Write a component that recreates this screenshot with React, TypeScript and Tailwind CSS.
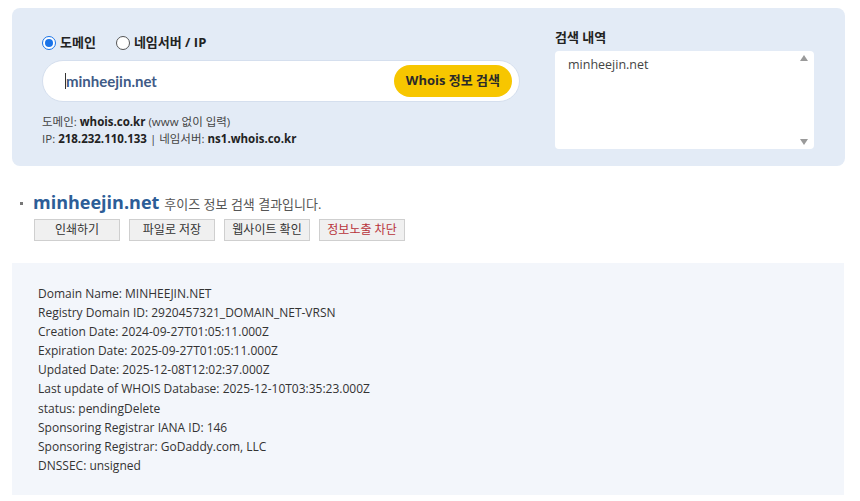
import React from "react";

const whoisLines = [
  "Domain Name: MINHEEJIN.NET",
  "Registry Domain ID: 2920457321_DOMAIN_NET-VRSN",
  "Creation Date: 2024-09-27T01:05:11.000Z",
  "Expiration Date: 2025-09-27T01:05:11.000Z",
  "Updated Date: 2025-12-08T12:02:37.000Z",
  "Last update of WHOIS Database: 2025-12-10T03:35:23.000Z",
  "status: pendingDelete",
  "Sponsoring Registrar IANA ID: 146",
  "Sponsoring Registrar: GoDaddy.com, LLC",
  "DNSSEC: unsigned",
];

const font = "font-['Open_Sans','Noto_Sans_CJK_KR',sans-serif]";

function Radio({ checked, label }: { checked?: boolean; label: string }) {
  return (
    <label className="flex items-center gap-[4px]">
      <span
        className={
          checked
            ? "w-[14px] h-[14px] rounded-full border-[1.5px] border-[#1a73e8] bg-white flex items-center justify-center"
            : "w-[14px] h-[14px] rounded-full border border-[#555] bg-white"
        }
      >
        {checked && <span className="w-[8px] h-[8px] rounded-full bg-[#1a73e8]" />}
      </span>
      <span className="text-[13px] font-bold text-[#222]">{label}</span>
    </label>
  );
}

function ActionButton({ label, red }: { label: string; red?: boolean }) {
  return (
    <button
      className={
        "w-[86px] h-[22px] bg-[#f0f0f0] border border-[#cfcfcf] text-[12px] " +
        (red ? "text-[#b8333a]" : "text-[#333]")
      }
    >
      {label}
    </button>
  );
}

export default function App() {
  return (
    <div className={`w-[860px] h-[501px] bg-white overflow-hidden ${font}`}>
      <div className="mx-[12px] mt-[8px] w-[833px] h-[158px] rounded-[8px] bg-[#e3ebf6] flex pl-[30px] pt-[27px]">
        <div className="w-[478px] flex flex-col">
          <div className="flex items-center gap-[20px] h-[16px]">
            <Radio checked label="도메인" />
            <Radio label="네임서버 / IP" />
          </div>
          <div className="mt-[9px] h-[42px] rounded-full bg-white border border-[#d5dfee] flex items-center justify-between pl-[22px] pr-[7px]">
            <div className="flex items-center">
              <span className="w-[1px] h-[16px] bg-[#333]" />
              <span className="text-[15px] font-bold text-[#3f5b86] font-['Lato','Noto_Sans_CJK_KR',sans-serif]">
                minheejin.net
              </span>
            </div>
            <button className="h-[32px] px-[12px] rounded-full bg-[#f7c600] text-[13px] font-bold text-[#2a2a2a]">
              Whois 정보 검색
            </button>
          </div>
          <div className="mt-[11px] text-[11.5px] leading-[17px] text-[#444]">
            <p>
              도메인: <b className="text-[#222]">whois.co.kr</b> (www 없이 입력)
            </p>
            <p>
              IP: <b className="text-[#222]">218.232.110.133</b> | 네임서버:{" "}
              <b className="text-[#222]">ns1.whois.co.kr</b>
            </p>
          </div>
        </div>
        <div className="ml-[35px] flex flex-col">
          <p className="text-[13px] font-bold text-[#222] leading-[16px] -mt-[6px]">검색 내역</p>
          <div className="mt-[6px] w-[259px] h-[98px] bg-white rounded-[4px] flex">
            <div className="flex-1 pl-[13px] pt-[5px] text-[12.5px] text-[#444]">minheejin.net</div>
            <div className="w-[12px] my-[1px] mr-[4px] flex flex-col items-center justify-between py-[3px]">
              <svg width="8" height="6" viewBox="0 0 8 6">
                <path d="M4 0L8 6H0z" fill="#9a9a9a" />
              </svg>
              <svg width="8" height="6" viewBox="0 0 8 6">
                <path d="M0 0h8L4 6z" fill="#9a9a9a" />
              </svg>
            </div>
          </div>
        </div>
      </div>

      <div className="mt-[23px] pl-[20px] flex items-baseline gap-[5px]">
        <span className="w-[3px] h-[3px] bg-[#777] relative -top-[4px]" />
        <span className="ml-[5px] text-[18px] font-bold text-[#2c5d97]">minheejin.net</span>
        <span className="text-[13px] text-[#555]">후이즈 정보 검색 결과입니다.</span>
      </div>
      <div className="mt-[3px] pl-[34px] flex gap-[9px]">
        <ActionButton label="인쇄하기" />
        <ActionButton label="파일로 저장" />
        <ActionButton label="웹사이트 확인" />
        <ActionButton label="정보노출 차단" red />
      </div>

      <div className="mt-[22px] mx-[12px] w-[832px] h-[232px] bg-[#f3f6fb] pl-[26px] pt-[21px]">
        {whoisLines.map((line) => (
          <p key={line} className="text-[12px] leading-[19.1px] text-[#333]">
            {line}
          </p>
        ))}
      </div>
    </div>
  );
}
